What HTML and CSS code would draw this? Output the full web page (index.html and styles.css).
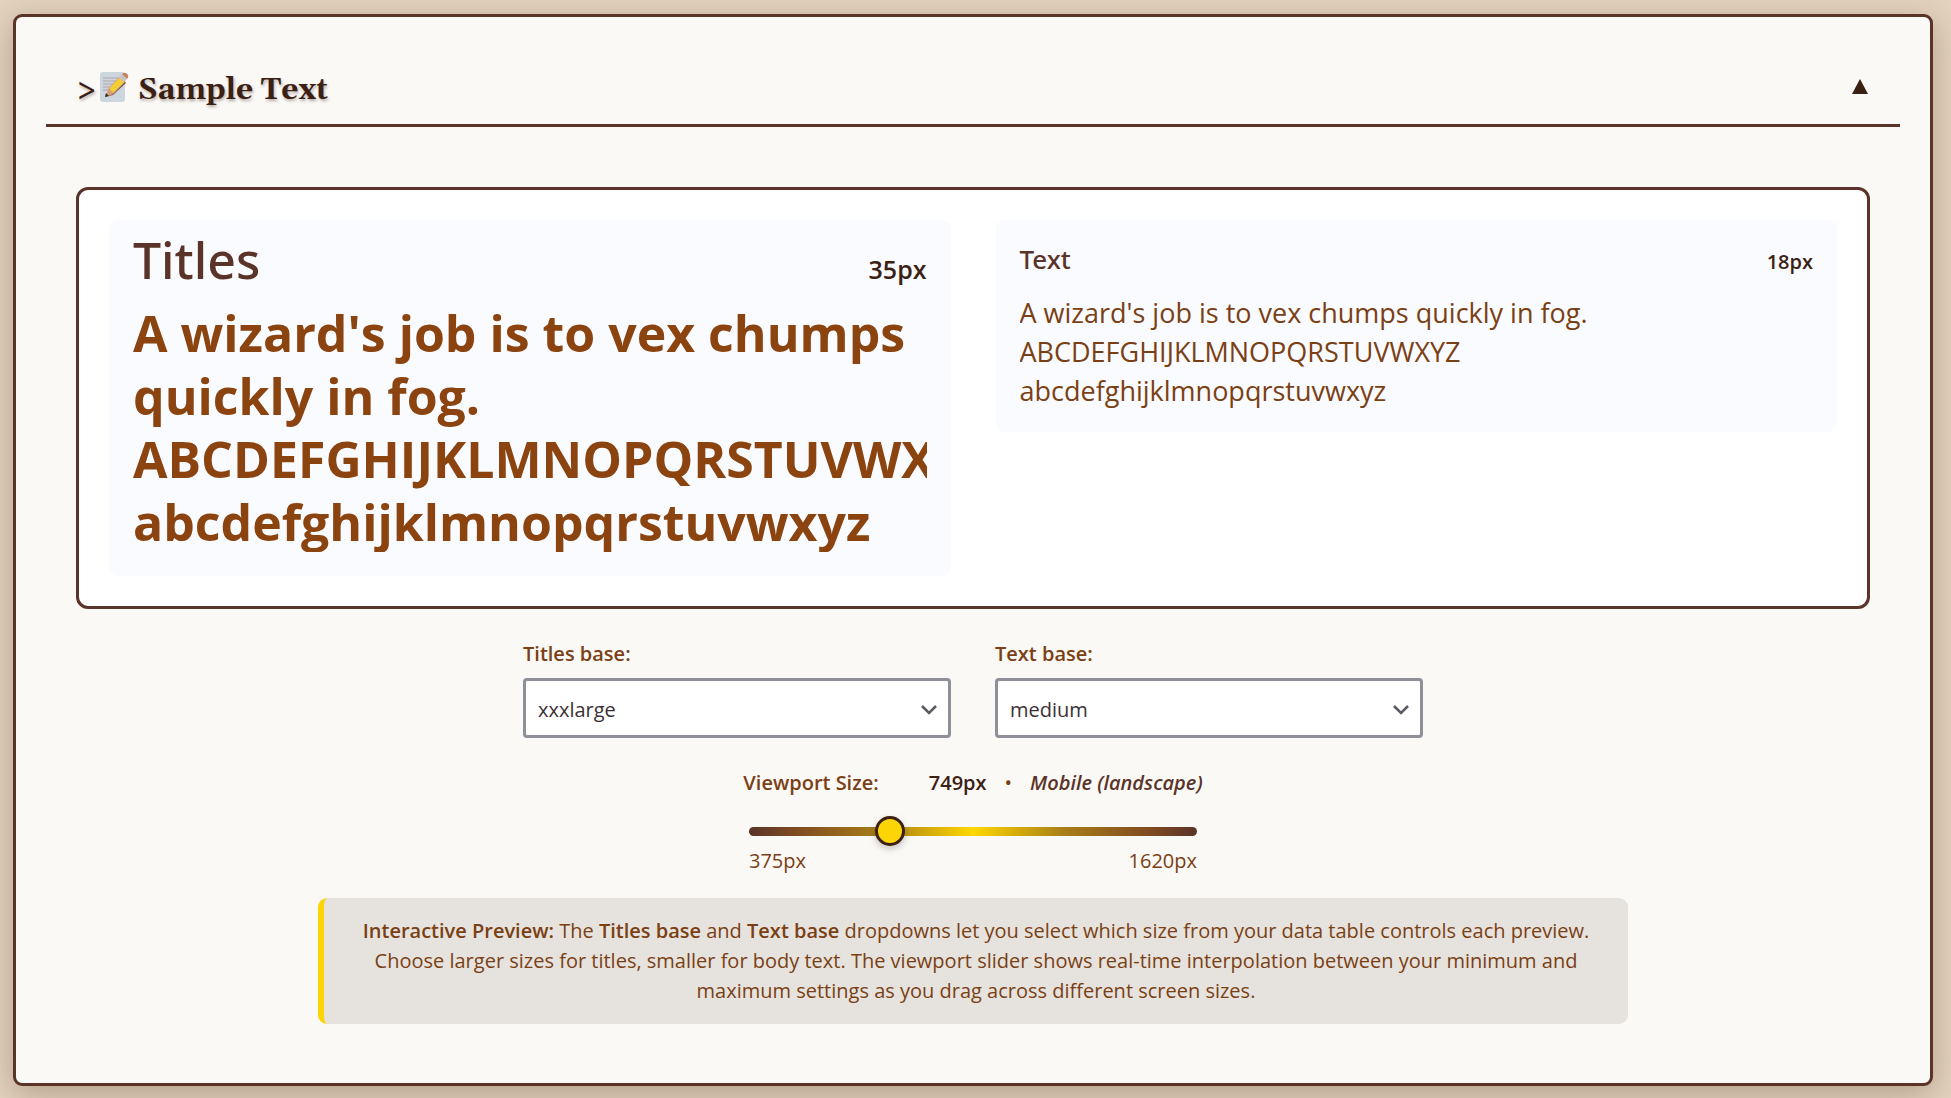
FILE: index.html
```html
<!DOCTYPE html>
<html lang="en">
<head>
<meta charset="utf-8">
<title>Sample Text</title>
<link rel="stylesheet" href="styles.css">
</head>
<body>
<section class="panel">
  <header class="panel-header">
    <h2 class="panel-title">
      <span class="marker">&gt;</span>
      <svg class="memo" viewBox="0 0 30 30" aria-hidden="true">
        <rect x="1" y="0" width="25" height="30" rx="3" fill="#cdd5de"/>
        <path d="M4 6h15M4 9h13M4 12h11M4 15h8M4 18h6" stroke="#b0a3a8" stroke-width="1"/>
        <path d="M25 8l2 3-13 12-8 2 2-3z" fill="#7c5a4d"/>
        <path d="M9 17L20 5l6 5-12 12z" fill="#d9a173"/>
        <path d="M11 16L20 6l5 4-9 9q-2 2-4 0t-1-3z" fill="#f3cf36"/>
        <path d="M9 17l-2 8 7-3-2-4z" fill="#d9a173"/>
        <path d="M7 21l-1 4 4-1z" fill="#3f2a28"/>
        <path d="M20 5l3-3 5 5-3 3z" fill="#c9c3c8"/>
        <path d="M23 2q2-2 4-1l2 2q1 2-1 4z" fill="#c08560"/>
      </svg>
      <span>Sample Text</span>
    </h2>
    <button class="toggle" type="button" aria-label="Collapse">
      <svg class="toggle-icon" viewBox="0 0 16 15" aria-hidden="true"><path d="M8 0l8 15H0z" fill="#3b2014"/></svg>
    </button>
  </header>

  <div class="preview">
    <article class="sample">
      <div class="sample-head"><h3 class="sample-name name-large">Titles</h3><span class="size size-large">35px</span></div>
      <div class="sample-text titles-text">A wizard's job is to vex chumps quickly in fog.<br>ABCDEFGHIJKLMNOPQRSTUVWXYZ<br>abcdefghijklmnopqrstuvwxyz</div>
    </article>
    <article class="sample sample-body">
      <div class="sample-head"><h3 class="sample-name">Text</h3><span class="size">18px</span></div>
      <div class="sample-text body-text">A wizard's job is to vex chumps quickly in fog.<br>ABCDEFGHIJKLMNOPQRSTUVWXYZ<br>abcdefghijklmnopqrstuvwxyz</div>
    </article>
  </div>

  <div class="bases">
    <div class="field">
      <label for="titles-base">Titles base:</label>
      <div class="select-wrap">
        <select id="titles-base"><option>xxxlarge</option><option>medium</option></select>
        <svg class="chevron" viewBox="0 0 16 10" aria-hidden="true"><path d="M1 1l7 7 7-7" fill="none" stroke="#5b5b66" stroke-width="2.6"/></svg>
      </div>
    </div>
    <div class="field">
      <label for="text-base">Text base:</label>
      <div class="select-wrap">
        <select id="text-base"><option>medium</option><option>xxxlarge</option></select>
        <svg class="chevron" viewBox="0 0 16 10" aria-hidden="true"><path d="M1 1l7 7 7-7" fill="none" stroke="#5b5b66" stroke-width="2.6"/></svg>
      </div>
    </div>
  </div>

  <div class="viewport">
    <div class="viewport-info">
      <label for="viewport">Viewport Size:</label>
      <div class="viewport-value"><span class="px">749px</span><span>•</span><em class="device">Mobile (landscape)</em></div>
    </div>
    <div class="slider">
      <input id="viewport" class="range" type="range" min="375" max="1620" value="749">
      <div class="limits"><span>375px</span><span>1620px</span></div>
    </div>
  </div>

  <p class="note"><strong>Interactive Preview:</strong> The <strong>Titles base</strong> and <strong>Text base</strong> dropdowns let you select which size from your data table controls each preview. Choose larger sizes for titles, smaller for body text. The viewport slider shows real-time interpolation between your minimum and maximum settings as you drag across different screen sizes.</p>
</section>
</body>
</html>
```
FILE: styles.css
```css
* { box-sizing: border-box; }

body {
  margin: 0;
  padding: 14px 18px 12px 13px;
  background: #e4d3bf;
  color: #7a4014;
  font: 20px/30px "Segoe UI", "Open Sans", sans-serif;
}

.panel {
  padding: 30px;
  border: 3px solid #5a3428;
  border-radius: 9px;
  background: #faf9f6;
  box-shadow: 0 8px 32px rgba(60, 35, 20, 0.3);
}

.panel-header {
  display: flex;
  align-items: center;
  justify-content: space-between;
  height: 80px;
  padding: 4px 32px 0 30px;
  border-bottom: 3px solid #5a3428;
}

.panel-title {
  display: flex;
  align-items: center;
  margin: 0;
  color: #3b2014;
  font: bold 30px/46px Georgia, Gelasio, "DejaVu Serif", serif;
  text-shadow: 1px 2px 3px rgba(60, 30, 20, 0.35);
}
.panel-title span { padding-top: 4px; }

.memo { width: 30px; height: 30px; margin: 0 9px 2px 2px; }

.toggle {
  padding: 0;
  border: 0;
  background: none;
}
.toggle-icon {
  display: block;
  width: 16px;
  height: 15px;
  margin-bottom: 3px;
}

.preview {
  display: grid;
  grid-template-columns: 1fr 1fr;
  align-items: start;
  gap: 45px;
  margin: 60px 30px 0;
  padding: 30px;
  border: 3px solid #5a3428;
  border-radius: 12px;
  background: #fff;
}

.sample {
  min-width: 0;
  padding: 8px 24px 24px;
  border-radius: 9px;
  background: #fafbff;
}

.sample-head {
  display: flex;
  align-items: baseline;
  justify-content: space-between;
  margin-bottom: 10px;
}

.sample-name {
  margin: 0;
  color: #5a3428;
  font: 500 26px/38px "Segoe UI", "Noto Sans", sans-serif;
}
.name-large { font-size: 50px; line-height: 64px; }

.size { color: #3b2014; font-weight: 600; }
.size-large { font-size: 25px; }

.sample-text { overflow: hidden; }
.titles-text {
  height: 250px;
  color: #8b430f;
  font-size: 50px;
  font-weight: 700;
  line-height: 63px;
}
.sample-body { padding-top: 20px; padding-bottom: 22px; }
.sample-body .sample-head { margin-bottom: 15px; }
.body-text { font-size: 27px; line-height: 39px; }

.bases {
  display: grid;
  grid-template-columns: 428px 428px;
  justify-content: center;
  gap: 44px;
  margin-top: 30px;
}

.field label { display: block; margin-bottom: 9px; }
label { font-weight: 600; }

.select-wrap { display: grid; align-items: center; }
.select-wrap > * { grid-area: 1 / 1; }

select {
  height: 60px;
  padding: 4px 12px 0;
  border: 3px solid #8f8f9a;
  border-radius: 4px;
  background: #fff;
  color: #3b3034;
  font: inherit;
  appearance: none;
}

.chevron {
  justify-self: end;
  width: 16px;
  height: 10px;
  margin-top: 3px;
  margin-right: 14px;
  pointer-events: none;
}

.viewport {
  display: flex;
  flex-direction: column;
  align-items: center;
  margin-top: 30px;
}
.viewport-info { display: flex; gap: 50px; }
.viewport-value { display: flex; gap: 18px; }
.px { color: #3b2014; font-weight: 600; }
.device { color: #5a3428; font-weight: 600; }

.slider { width: 448px; margin-top: 18px; }

.range {
  display: block;
  width: 100%;
  height: 30px;
  margin: 0;
  background: none;
  appearance: none;
}
.range::-webkit-slider-runnable-track {
  height: 9px;
  border-radius: 5px;
  background: linear-gradient(90deg, #5a3428, #7e4a22 10%, #a98018 30%, #ffd700 50%, #a98018 70%, #7e4a22 90%, #5a3428);
}
.range::-webkit-slider-thumb {
  width: 30px;
  height: 30px;
  margin-top: -11px;
  border: 3px solid #3b2014;
  border-radius: 50%;
  background: #fcd506;
  box-shadow: 0 3px 6px rgba(60, 30, 20, 0.25);
  appearance: none;
}

.limits { display: flex; justify-content: space-between; }

.note {
  max-width: 1310px;
  margin: 22px auto 29px;
  padding: 18px 30px;
  border-left: 6px solid #fcd506;
  border-radius: 9px;
  background: #e6e3de;
  text-align: center;
}
.note strong { font-weight: 600; }
```
